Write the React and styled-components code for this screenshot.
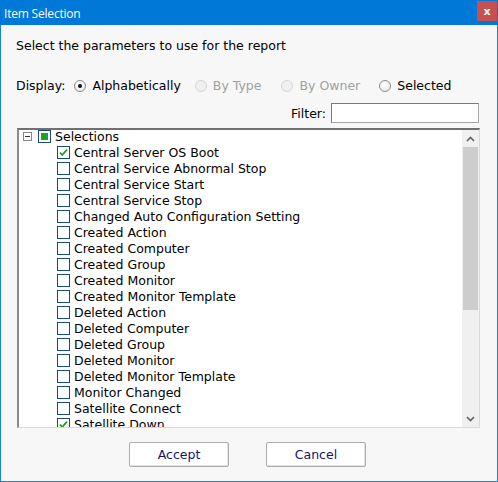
import React from "react";
import styled, { createGlobalStyle } from "styled-components";

const Global = createGlobalStyle`
  html, body { margin: 0; padding: 0; background: #f7f7f7; }
  * { box-sizing: border-box; }
`;

const Window = styled.div`
  width: 498px;
  height: 482px;
  display: flex;
  flex-direction: column;
  background: #f7f7f7;
  border: 1px solid #1883d7;
  border-top: none;
  font-family: "DejaVu Sans", Verdana, sans-serif;
  font-size: 12.5px;
  color: #000;
`;

const TitleBar = styled.div`
  height: 25px;
  background: #0078d7;
  display: flex;
  align-items: center;
  justify-content: space-between;
  padding: 0 1px 0 4px;
  margin: 0 -1px;
  position: relative;
`;

const Title = styled.span`
  font-family: "Open Sans", "Noto Sans", sans-serif;
  font-size: 12px;
  color: #fff;
  letter-spacing: -0.2px;
  margin-top: 1px;
`;

const CloseButton = styled.div`
  width: 20px;
  height: 20px;
  margin-top: -3px;
  background: #c75050;
  color: #fff;
  display: flex;
  align-items: center;
  justify-content: center;
  font-family: "DejaVu Sans", sans-serif;
  font-weight: bold;
  font-size: 11px;
`;

const Body = styled.div`
  flex: 1;
  display: flex;
  flex-direction: column;
  padding: 13px 17px 0 15px;
`;

const Intro = styled.div`
  line-height: 16px;
`;

const DisplayRow = styled.div`
  margin-top: 24px;
  height: 16px;
  display: flex;
  align-items: center;
  line-height: 16px;
`;

const Label = styled.span`
  margin-right: 9px;
`;

const RadioOption = styled.label`
  display: flex;
  align-items: center;
  margin-right: ${(p) => p.$gap}px;
  color: ${(p) => (p.$disabled ? "#a0a0a0" : "#000")};
`;

const RadioCircle = styled.span`
  width: 12px;
  height: 12px;
  border-radius: 50%;
  border: 1px solid ${(p) => (p.$disabled ? "#d4d4d4" : "#8a8a8a")};
  background: ${(p) => (p.$disabled ? "#f0f0f0" : "radial-gradient(circle at 40% 35%, #ffffff, #e6e6e6)")};
  margin-right: 6px;
  display: flex;
  align-items: center;
  justify-content: center;
  &::after {
    content: "";
    width: 4px;
    height: 4px;
    border-radius: 50%;
    background: ${(p) => (p.$checked ? "#111" : "transparent")};
  }
`;

const FilterRow = styled.div`
  margin-top: 9px;
  display: flex;
  justify-content: flex-end;
  align-items: center;
`;

const FilterLabel = styled.span`
  margin-right: 5px;
`;

const FilterInput = styled.div`
  width: 148px;
  height: 20px;
  background: #fff;
  border: 1px solid #a6a6a6;
  border-top-color: #7a7a7a;
  border-left-color: #7a7a7a;
  margin-right: 1px;
`;

const ListBox = styled.div`
  margin-top: 5px;
  margin-left: 1px;
  height: 300px;
  background: #fff;
  border: 1px solid #d9d9d9;
  border-top: 2px solid #707070;
  border-left: 2px solid #8c8c8c;
  display: flex;
  overflow: hidden;
`;

const TreeArea = styled.div`
  flex: 1;
  overflow: hidden;
  padding-left: 4px;
  margin-top: -2px;
`;

const Row = styled.div`
  height: 16px;
  display: flex;
  align-items: center;
  padding-left: ${(p) => p.$indent}px;
  white-space: nowrap;
`;

const Expander = styled.span`
  width: 9px;
  height: 9px;
  border: 1px solid #888;
  display: flex;
  align-items: center;
  justify-content: center;
  margin-right: 6px;
  &::after {
    content: "";
    width: 5px;
    height: 1px;
    background: #333;
  }
`;

const Check = styled.span`
  width: 13px;
  height: 13px;
  border: 1px solid #1c4a78;
  background: #fff;
  margin-right: 4px;
  display: flex;
  align-items: center;
  justify-content: center;
  flex-shrink: 0;
`;

const PartialFill = styled.span`
  width: 7px;
  height: 7px;
  background: #21a121;
`;

const Scrollbar = styled.div`
  width: 17px;
  background: #f0f0f0;
  display: flex;
  flex-direction: column;
  align-items: center;
`;

const ScrollArrow = styled.div`
  height: 17px;
  width: 17px;
  display: flex;
  align-items: center;
  justify-content: center;
`;

const Thumb = styled.div`
  width: 15px;
  height: 163px;
  background: #cdcdcd;
`;

const ScrollSpace = styled.div`
  flex: 1;
`;

const ButtonRow = styled.div`
  margin-top: 14px;
  display: flex;
  justify-content: center;
  gap: 37px;
  padding-right: 1px;
`;

const Button = styled.div`
  width: 100px;
  height: 25px;
  background: #fff;
  border: 1px solid #adadad;
  border-radius: 2px;
  box-shadow: inset -1px -1px 0 #e3e3e3;
  display: flex;
  align-items: center;
  justify-content: center;
  color: #14146e;
`;

const items = [
  ["Central Server OS Boot", true],
  ["Central Service Abnormal Stop", false],
  ["Central Service Start", false],
  ["Central Service Stop", false],
  ["Changed Auto Configuration Setting", false],
  ["Created Action", false],
  ["Created Computer", false],
  ["Created Group", false],
  ["Created Monitor", false],
  ["Created Monitor Template", false],
  ["Deleted Action", false],
  ["Deleted Computer", false],
  ["Deleted Group", false],
  ["Deleted Monitor", false],
  ["Deleted Monitor Template", false],
  ["Monitor Changed", false],
  ["Satellite Connect", false],
  ["Satellite Down", true],
];

const Tick = () => (
  <svg width="11" height="11" viewBox="0 0 11 11">
    <path d="M2 5.5 L4.3 8 L9 2.5" fill="none" stroke="#1f9a1f" strokeWidth="1.8" />
  </svg>
);

const Chevron = ({ up }) => (
  <svg width="9" height="6" viewBox="0 0 9 6">
    <path
      d={up ? "M1 5 L4.5 1.5 L8 5" : "M1 1 L4.5 4.5 L8 1"}
      fill="none"
      stroke="#606060"
      strokeWidth="1.6"
    />
  </svg>
);

export default function App() {
  return (
    <>
      <Global />
      <Window>
        <TitleBar>
          <Title>Item Selection</Title>
          <CloseButton>x</CloseButton>
        </TitleBar>
        <Body>
          <Intro>Select the parameters to use for the report</Intro>
          <DisplayRow>
            <Label>Display:</Label>
            <RadioOption $gap={14}>
              <RadioCircle $checked />
              Alphabetically
            </RadioOption>
            <RadioOption $gap={20} $disabled>
              <RadioCircle $disabled />
              By Type
            </RadioOption>
            <RadioOption $gap={19} $disabled>
              <RadioCircle $disabled />
              By Owner
            </RadioOption>
            <RadioOption $gap={0}>
              <RadioCircle />
              Selected
            </RadioOption>
          </DisplayRow>
          <FilterRow>
            <FilterLabel>Filter:</FilterLabel>
            <FilterInput />
          </FilterRow>
          <ListBox>
            <TreeArea>
              <Row $indent={0}>
                <Expander />
                <Check>
                  <PartialFill />
                </Check>
                Selections
              </Row>
              {items.map(([name, checked]) => (
                <Row key={name} $indent={34}>
                  <Check>{checked && <Tick />}</Check>
                  {name}
                </Row>
              ))}
            </TreeArea>
            <Scrollbar>
              <ScrollArrow>
                <Chevron up />
              </ScrollArrow>
              <Thumb />
              <ScrollSpace />
              <ScrollArrow>
                <Chevron />
              </ScrollArrow>
            </Scrollbar>
          </ListBox>
          <ButtonRow>
            <Button>Accept</Button>
            <Button>Cancel</Button>
          </ButtonRow>
        </Body>
      </Window>
    </>
  );
}
